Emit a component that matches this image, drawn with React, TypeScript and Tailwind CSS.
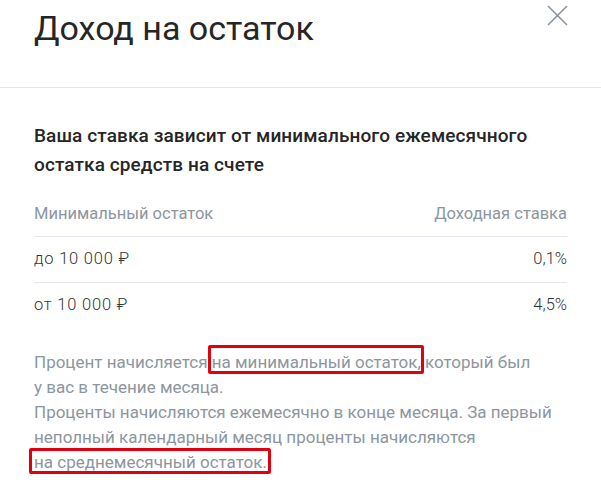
import React from "react";

export default function App() {
  return (
    <div className="w-[601px] h-[484px] bg-white overflow-hidden" style={{ fontFamily: "Roboto, 'Liberation Sans', sans-serif" }}>
      <div className="relative h-[88px] border-b border-[#e3e6ea] px-[34px]">
        <h1 className="pt-[6px] text-[34px] leading-[44px] text-[#262626] font-normal">Доход на остаток</h1>
        <button className="absolute left-[547px] top-[5px] w-[21px] h-[21px]" aria-label="Закрыть">
          <svg viewBox="0 0 21 21" className="w-[21px] h-[21px]" fill="none" stroke="#8a949f" strokeWidth="1.6">
            <path d="M1 1L20 20M20 1L1 20" />
          </svg>
        </button>
      </div>
      <div className="px-[34px] pt-[33px]">
        <p className="text-[19px] leading-[29px] font-medium text-[#262626] tracking-[0.1px]">
          Ваша ставка зависит от минимального ежемесячного остатка средств на счете
        </p>
        <div className="mt-[25px] flex justify-between text-[16.5px] leading-[20px] text-[#8d96a0] pb-[12px] border-b border-[#e3e6ea]">
          <span>Минимальный остаток</span>
          <span>Доходная ставка</span>
        </div>
        <div className="flex justify-between text-[16.5px] leading-[20px] text-[#333] font-light pt-[12px] pb-[13px] border-b border-[#e3e6ea]">
          <span className="tracking-[0.8px]">до 10 000 ₽</span>
          <span>0,1%</span>
        </div>
        <div className="flex justify-between text-[16.5px] leading-[20px] text-[#333] font-light pt-[12px] pb-[13px]">
          <span className="tracking-[0.8px]">от 10 000 ₽</span>
          <span>4,5%</span>
        </div>
        <p className="mt-[22px] text-[17px] leading-[25px] text-[#8d96a0]">
          Процент начисляется{" "}
          <span className="relative">
            на минимальный остаток,
            <span className="absolute left-[-4px] right-[-3px] top-[-7px] bottom-[-2px] border-[3px] border-[#e0000f] rounded-[2px]" />
          </span>{" "}
          который был
          <br />
          у вас в течение месяца.
          <br />
          Проценты начисляются ежемесячно в конце месяца. За первый
          <br />
          неполный календарный месяц проценты начисляются
          <br />
          <span className="relative">
            на среднемесячный остаток.
            <span className="absolute left-[-5px] right-[-4px] top-[-4px] bottom-[-2px] border-[3px] border-[#e0000f] rounded-[2px]" />
          </span>
        </p>
      </div>
    </div>
  );
}
